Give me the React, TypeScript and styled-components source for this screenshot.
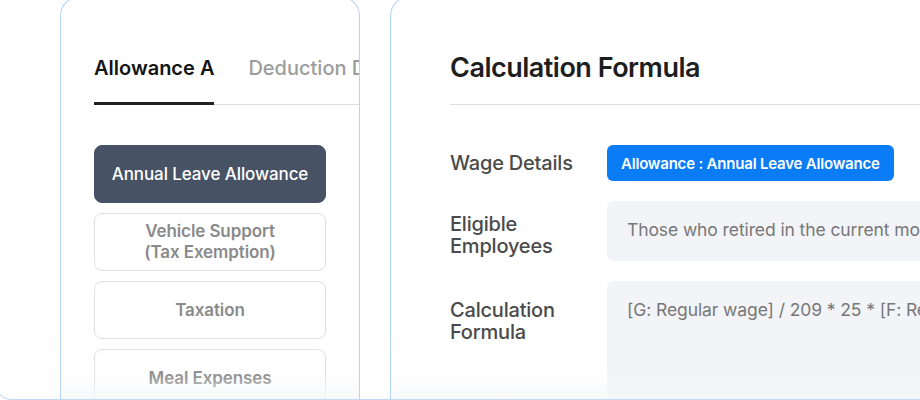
import React from 'react';
import styled, { createGlobalStyle } from 'styled-components';

const GlobalStyle = createGlobalStyle`
  html, body {
    margin: 0;
    padding: 0;
    background: #ffffff;
    overflow: hidden;
  }
  * {
    box-sizing: border-box;
  }
`;

const Stage = styled.div`
  display: flex;
  align-items: flex-start;
  gap: 30px;
  width: 940px;
  height: 400px;
  margin-left: -6px;
  padding-left: 65px;
  border-left: 1px solid #c0d9f6;
  border-bottom: 1px solid #c0d9f6;
  border-bottom-left-radius: 18px;
  overflow: hidden;
  font-family: Inter, 'Noto Sans', sans-serif;
`;

const Card = styled.section<{ $width: number; $padX: number }>`
  position: relative;
  flex-shrink: 0;
  width: ${(p) => p.$width}px;
  height: 403px;
  margin-top: -4px;
  padding: 0 0 0 ${(p) => p.$padX}px;
  border: 1px solid #b5d3f5;
  border-bottom: none;
  border-radius: 20px 20px 0 0;
  background: #ffffff;
  overflow: hidden;

  /* soft fade at the bottom of each card */
  &::after {
    content: '';
    position: absolute;
    left: 0;
    right: 0;
    bottom: 0;
    height: 64px;
    pointer-events: none;
    background: linear-gradient(
      to bottom,
      rgba(246, 247, 249, 0) 0%,
      rgba(246, 247, 249, 0.08) 65%,
      rgba(246, 247, 249, 0.85) 100%
    );
  }
`;

const TabBar = styled.div`
  display: flex;
  margin-top: 59px;
  border-bottom: 1px solid #dcdde0;
  white-space: nowrap;
`;

const Tab = styled.div<{ $active?: boolean }>`
  flex-shrink: 0;
  padding: 0 0 22px;
  margin-right: 34px;
  margin-bottom: -1px;
  font-size: 20px;
  line-height: 24px;
  font-weight: ${(p) => (p.$active ? 600 : 500)};
  color: ${(p) => (p.$active ? '#141414' : '#9c9c9c')};
  border-bottom: 3px solid ${(p) => (p.$active ? '#222222' : 'transparent')};
`;

const ItemList = styled.div`
  display: flex;
  flex-direction: column;
  gap: 10px;
  width: 232px;
  margin-top: 40px;
`;

const Item = styled.div<{ $active?: boolean }>`
  display: flex;
  align-items: center;
  justify-content: center;
  height: 58px;
  border-radius: 8px;
  text-align: center;
  font-size: 17px;
  line-height: 21px;
  font-weight: ${(p) => (p.$active ? 500 : 600)};
  letter-spacing: -0.1px;
  color: ${(p) => (p.$active ? '#ffffff' : '#8a8a8a')};
  background: ${(p) => (p.$active ? '#475264' : '#ffffff')};
  border: 1px solid ${(p) => (p.$active ? '#475264' : '#dedfe2')};
`;

const Title = styled.h2`
  margin: 55px 0 0;
  padding-bottom: 20px;
  font-size: 27px;
  line-height: 32px;
  font-weight: 600;
  letter-spacing: -0.5px;
  color: #1e1e1e;
  border-bottom: 1px solid #dcdde0;
`;

const Rows = styled.div`
  display: flex;
  flex-direction: column;
  gap: 20px;
  margin-top: 40px;
`;

const Row = styled.div<{ $center?: boolean }>`
  display: grid;
  grid-template-columns: 157px 1fr;
  align-items: ${(p) => (p.$center ? 'center' : 'start')};
`;

const Label = styled.div<{ $top?: number }>`
  padding-top: ${(p) => p.$top ?? 0}px;
  font-size: 20px;
  line-height: 22px;
  font-weight: 500;
  letter-spacing: -0.2px;
  color: #4a4a4a;
`;

const Badge = styled.div`
  justify-self: start;
  display: flex;
  align-items: center;
  height: 36px;
  padding: 0 14px;
  border-radius: 6px;
  background: #0a7cf5;
  color: #ffffff;
  font-size: 15px;
  font-weight: 600;
  letter-spacing: -0.2px;
  white-space: nowrap;
`;

const Field = styled.div<{ $height: number }>`
  height: ${(p) => p.$height}px;
  padding: 17px 20px;
  border-radius: 6px;
  background: #f3f4f7;
  font-size: 17.5px;
  line-height: 24px;
  letter-spacing: -0.1px;
  color: #777777;
  white-space: nowrap;
  overflow: hidden;
`;

export default function App() {
  return (
    <>
      <GlobalStyle />
      <Stage>
        <Card $width={300} $padX={33}>
          <TabBar>
            <Tab $active>Allowance A</Tab>
            <Tab>Deduction D</Tab>
          </TabBar>
          <ItemList>
            <Item $active>Annual Leave Allowance</Item>
            <Item>
              Vehicle Support
              <br />
              (Tax Exemption)
            </Item>
            <Item>Taxation</Item>
            <Item>Meal Expenses</Item>
          </ItemList>
        </Card>
        <Card $width={640} $padX={59}>
          <Title>Calculation Formula</Title>
          <Rows>
            <Row $center>
              <Label>Wage Details</Label>
              <Badge>Allowance : Annual Leave Allowance</Badge>
            </Row>
            <Row $center>
              <Label $top={8}>
                Eligible
                <br />
                Employees
              </Label>
              <Field $height={60}>Those who retired in the current month</Field>
            </Row>
            <Row>
              <Label $top={18}>
                Calculation
                <br />
                Formula
              </Label>
              <Field $height={140}>[G: Regular wage] / 209 * 25 * [F: Remaining leave days]</Field>
            </Row>
          </Rows>
        </Card>
      </Stage>
    </>
  );
}
